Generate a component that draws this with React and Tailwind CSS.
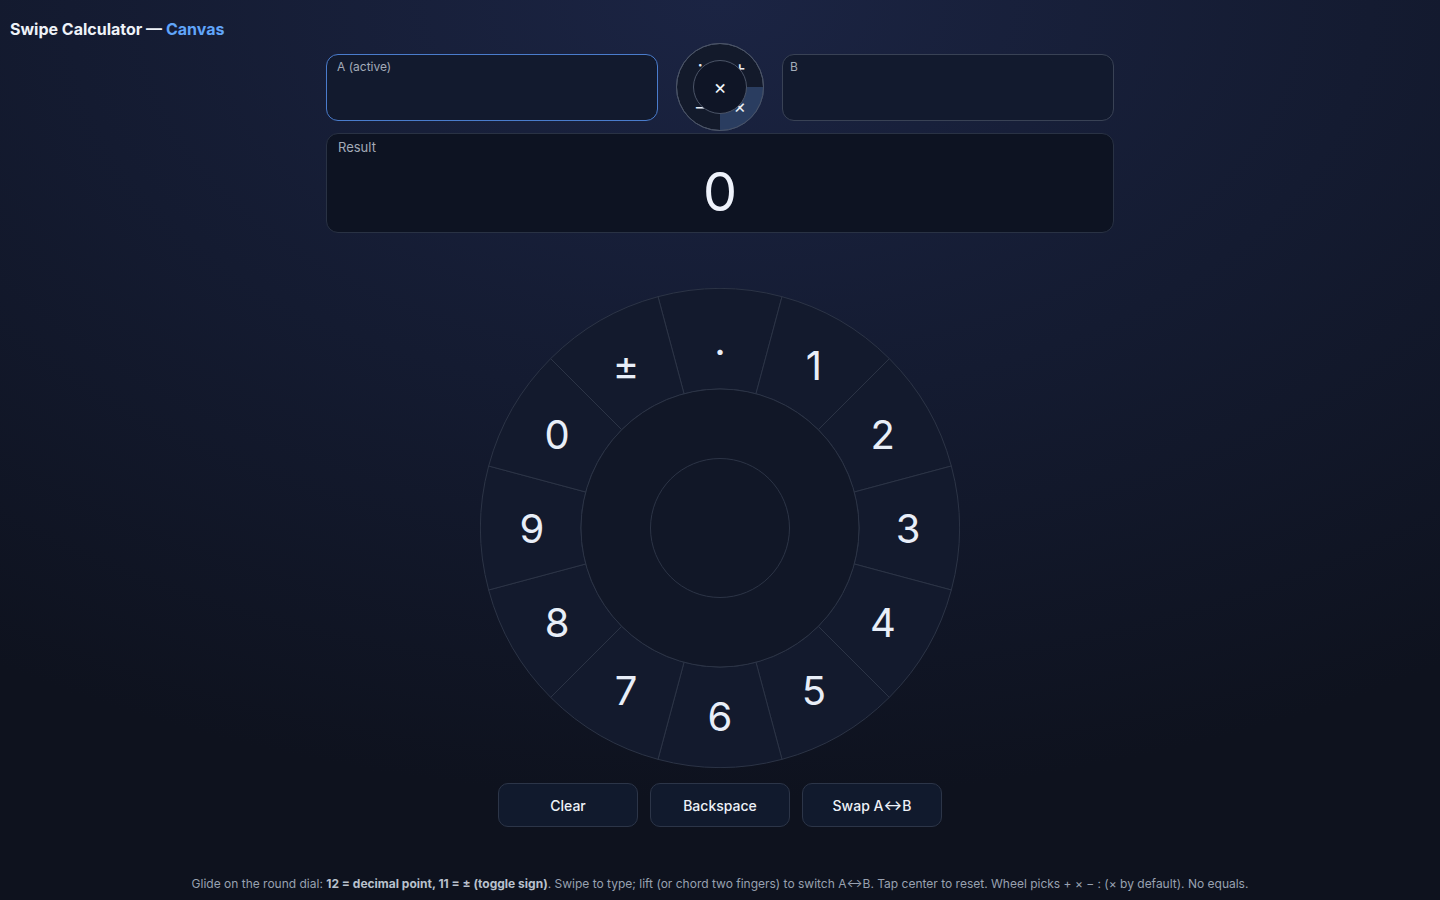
import React from "react";

const DIAL_LABELS = [".", "1", "2", "3", "4", "5", "6", "7", "8", "9", "0", "±"];
const OPS = [
    { label: "+", angle: -45 },
    { label: "×", angle: 45 },
    { label: "−", angle: 135 },
    { label: ":", angle: -135 },
];

// point on a circle, angle in degrees clockwise from 12 o'clock
function polar(cx, cy, r, deg) {
    const a = ((deg - 90) * Math.PI) / 180;
    return [cx + r * Math.cos(a), cy + r * Math.sin(a)];
}

function sectorPath(cx, cy, r0, r1, a0, a1) {
    const [x0, y0] = polar(cx, cy, r1, a0);
    const [x1, y1] = polar(cx, cy, r1, a1);
    const [x2, y2] = polar(cx, cy, r0, a1);
    const [x3, y3] = polar(cx, cy, r0, a0);
    return `M${x0} ${y0} A${r1} ${r1} 0 0 1 ${x1} ${y1} L${x2} ${y2} A${r0} ${r0} 0 0 0 ${x3} ${y3} Z`;
}

function OpWheel() {
    const c = 44;
    return (
        <svg width="88" height="88" viewBox="0 0 88 88" className="shrink-0">
            <circle cx={c} cy={c} r="43.5" fill="#131a2b" stroke="#4b5467" strokeWidth="1" />
            <path d={`M${c} ${c} L88 ${c} A44 44 0 0 1 ${c} 88 Z`} fill="#2a3d60" />
            <circle cx={c} cy={c} r="43.5" fill="none" stroke="#4b5467" strokeWidth="1" />
            {OPS.map((op) => {
                const [x, y] = polar(c, c, 28, op.angle + 90);
                return (
                    <text
                        key={op.label}
                        x={x}
                        y={y}
                        fill="#e8edf6"
                        fontSize="19"
                        fontFamily="Inter, sans-serif"
                        textAnchor="middle"
                        dominantBaseline="central"
                    >
                        {op.label}
                    </text>
                );
            })}
            <circle cx={c} cy={c} r="26.5" fill="#0f1526" stroke="#4b5467" strokeWidth="1" />
            <text
                x={c}
                y={c}
                fill="#f1f5fb"
                fontSize="20"
                fontFamily="Inter, sans-serif"
                textAnchor="middle"
                dominantBaseline="central"
            >
                ×
            </text>
        </svg>
    );
}

function Dial() {
    const c = 240;
    return (
        <svg width="480" height="480" viewBox="0 0 480 480">
            {DIAL_LABELS.map((label, i) => (
                <path
                    key={i}
                    d={sectorPath(c, c, 139, 239.5, i * 30 - 15, i * 30 + 15)}
                    fill="#131a2d"
                    stroke="#2c3446"
                    strokeWidth="1"
                />
            ))}
            <circle cx={c} cy={c} r="139" fill="#111727" stroke="#2c3446" strokeWidth="1" />
            <circle cx={c} cy={c} r="69.5" fill="none" stroke="#2c3446" strokeWidth="1" />
            {DIAL_LABELS.map((label, i) => {
                const [x, y] = polar(c, c, 188, i * 30);
                return (
                    <text
                        key={label}
                        x={x}
                        y={y}
                        fill="#e8eef8"
                        fontSize="40"
                        fontFamily="Inter, sans-serif"
                        textAnchor="middle"
                        dominantBaseline="central"
                    >
                        {label}
                    </text>
                );
            })}
        </svg>
    );
}

export default function App() {
    return (
        <div className="h-[900px] w-full overflow-hidden bg-[radial-gradient(1300px_800px_at_50%_0%,#1b2443_0%,#141b31_50%,#0e121e_100%)] font-['Inter',sans-serif] text-[#e8edf6]">
            {/* Title */}
            <h1 className="px-[10px] pt-[18px] text-[16px] font-bold leading-[22px] text-[#eef2f8]">
                Swipe Calculator — <span className="text-[#60a5fa]">Canvas</span>
            </h1>

            <div className="mx-auto w-[788px]">
                {/* Operands + operator wheel */}
                <div className="mt-[3px] flex items-center gap-[18px]">
                    <div className="h-[67px] w-[332px] shrink-0 rounded-xl border border-[#4a7ccc] bg-[#121a2e] px-[10px] pt-[3px] text-[12px] text-[#a3abb8]">
                        A (active)
                    </div>
                    <OpWheel />
                    <div className="h-[67px] w-[332px] shrink-0 rounded-xl border border-[#394255] bg-[#121a2e] px-[7px] pt-[3px] text-[12px] text-[#a3abb8]">
                        B
                    </div>
                </div>

                {/* Result */}
                <div className="mt-[2px] flex h-[100px] flex-col rounded-xl border border-[#293244] bg-[#0d1322] px-[11px] pt-[5px]">
                    <div className="text-[13px] leading-[16px] text-[#a3abb8]">Result</div>
                    <div className="mt-[5px] text-center text-[54px] leading-[64px] text-[#eef2fb]">0</div>
                </div>

                {/* Dial */}
                <div className="mt-[55px] flex justify-center">
                    <Dial />
                </div>

                {/* Actions */}
                <div className="mt-[15px] flex justify-center gap-3">
                    {["Clear", "Backspace", "Swap A↔B"].map((label) => (
                        <button
                            key={label}
                            className="h-[44px] w-[140px] rounded-[10px] border border-[#2c3548] bg-[#111a2d] text-[14px] font-medium text-[#eef2f8]"
                        >
                            {label}
                        </button>
                    ))}
                </div>
            </div>

            {/* Help line */}
            <p className="mt-[47px] text-center text-[12px] leading-[20px] text-[#98a1b0]">
                Glide on the round dial:{" "}
                <b className="font-bold text-[#b9c1cd]">12 = decimal point, 11 = ± (toggle sign)</b>. Swipe to type; lift
                (or chord two fingers) to switch A↔B. Tap center to reset. Wheel picks + × − : (× by default). No equals.
            </p>
        </div>
    );
}
